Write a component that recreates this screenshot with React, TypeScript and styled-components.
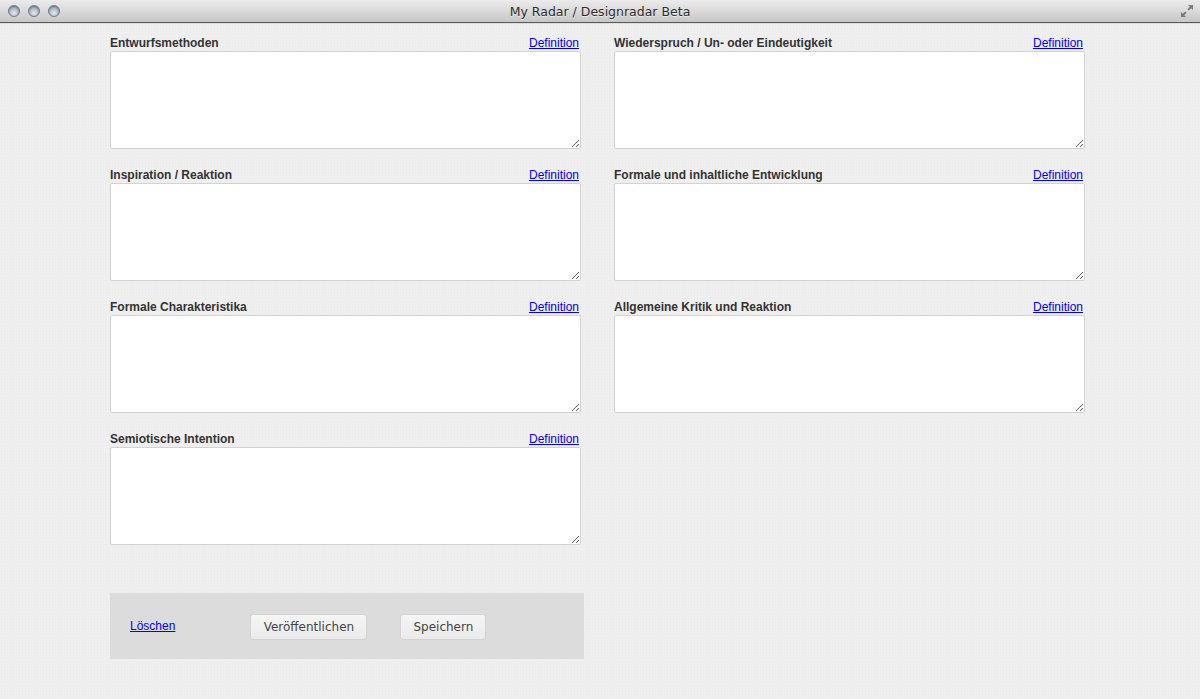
import React from "react";
import styled, { createGlobalStyle } from "styled-components";

const Global = createGlobalStyle`
  html, body { margin: 0; padding: 0; height: 100%; }
  body { background: #efefef; font-family: "Liberation Sans", Arial, sans-serif; overflow: hidden; }
  #root { height: 100%; }
`;

const Window = styled.div`
  display: flex;
  flex-direction: column;
  height: 100vh;
  background-color: #efefef;
  background-image: radial-gradient(rgba(0,0,0,0.025) 1px, transparent 1px);
  background-size: 3px 3px;
`;

const TitleBar = styled.div`
  position: relative;
  height: 22px;
  flex: 0 0 22px;
  display: flex;
  align-items: center;
  justify-content: center;
  background: linear-gradient(#ebebeb, #d6d6d6 60%, #c6c6c6);
  border-bottom: 1px solid #5a5a5a;
  box-shadow: 0 1px 0 #dcdcdc;
`;

const Lights = styled.div`
  position: absolute;
  left: 8px;
  top: 5px;
  display: flex;
  gap: 8px;
`;

const Light = styled.span`
  width: 12px;
  height: 12px;
  border-radius: 50%;
  box-sizing: border-box;
  border: 1px solid #6f7b88;
  background: radial-gradient(circle at 50% 70%, #e4eaf0 0%, #a9b6c3 55%, #7d8b99 100%);
  box-shadow: inset 0 1px 1px rgba(0,0,0,0.25);
`;

const Title = styled.div`
  font-family: "DejaVu Sans", sans-serif;
  font-size: 12.5px;
  color: #2e2e2e;
  text-shadow: 0 1px 0 rgba(255,255,255,0.6);
`;

const FullIcon = styled.svg`
  position: absolute;
  right: 6px;
  top: 4px;
`;

const Main = styled.div`
  padding: 13px 0 0 110px;
`;

const Grid = styled.div`
  display: grid;
  grid-template-columns: 471px 471px;
  column-gap: 33px;
  row-gap: 19px;
`;

const Field = styled.div`
  display: flex;
  flex-direction: column;
`;

const LabelRow = styled.div`
  display: flex;
  justify-content: space-between;
  align-items: flex-start;
  height: 15px;
  line-height: 14px;
  padding-right: 2px;
`;

const Label = styled.label`
  font-size: 12px;
  font-weight: bold;
  color: #333;
`;

const Link = styled.a`
  font-size: 12px;
  color: #0000ee;
  text-decoration: underline;
  cursor: pointer;
`;

const Area = styled.textarea`
  box-sizing: border-box;
  width: 471px;
  height: 98px;
  border: 1px solid #d2d2d2;
  border-radius: 2px;
  background: #fff;
  margin: 0;
  padding: 2px;
  font-family: "Liberation Sans", Arial, sans-serif;
  resize: both;
  outline: none;
`;

const Footer = styled.div`
  margin-top: 48px;
  width: 474px;
  height: 66px;
  box-sizing: border-box;
  background: #dcdcdc;
  display: flex;
  align-items: center;
  padding-left: 20px;
`;

const FooterLink = styled(Link)`
  font-size: 12px;
  margin-right: 75px;
`;

const Button = styled.button<{ $w: number }>`
  width: ${(p) => p.$w}px;
  height: 26px;
  margin-right: 33px;
  box-sizing: border-box;
  border: 1px solid #d3d3d3;
  border-radius: 3px;
  background: linear-gradient(#f5f5f5, #ebebeb);
  font-family: "DejaVu Sans", sans-serif;
  font-size: 12px;
  color: #444;
  padding: 0;
  margin-top: 1px;
`;

const fields = [
  "Entwurfsmethoden",
  "Wiederspruch / Un- oder Eindeutigkeit",
  "Inspiration / Reaktion",
  "Formale und inhaltliche Entwicklung",
  "Formale Charakteristika",
  "Allgemeine Kritik und Reaktion",
  "Semiotische Intention",
];

export default function App() {
  return (
    <>
      <Global />
      <Window>
        <TitleBar>
          <Lights>
            <Light />
            <Light />
            <Light />
          </Lights>
          <Title>My Radar / Designradar Beta</Title>
          <FullIcon width="14" height="14" viewBox="0 0 14 14">
            <path d="M8 1h5v5l-1.8-1.8-2.4 2.4-1.4-1.4 2.4-2.4z" fill="#7a7a7a" />
            <path d="M6 13H1V8l1.8 1.8 2.4-2.4 1.4 1.4-2.4 2.4z" fill="#7a7a7a" />
          </FullIcon>
        </TitleBar>
        <Main>
          <Grid>
            {fields.map((f) => (
              <Field key={f}>
                <LabelRow>
                  <Label>{f}</Label>
                  <Link>Definition</Link>
                </LabelRow>
                <Area />
              </Field>
            ))}
          </Grid>
          <Footer>
            <FooterLink>Löschen</FooterLink>
            <Button $w={117}>Veröffentlichen</Button>
            <Button $w={86}>Speichern</Button>
          </Footer>
        </Main>
      </Window>
    </>
  );
}
